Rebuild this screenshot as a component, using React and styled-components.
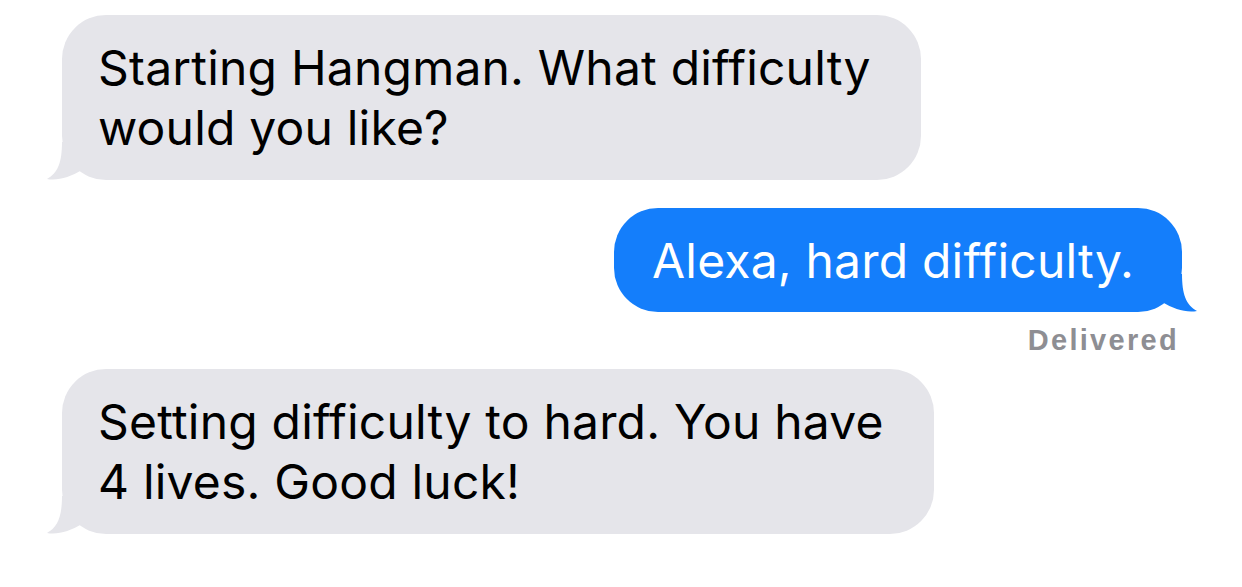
import React from 'react';
import styled, { createGlobalStyle } from 'styled-components';

const messages = [
  { id: 1, fromMe: false, lines: ['Starting Hangman. What difficulty', 'would you like?'] },
  { id: 2, fromMe: true, lines: ['Alexa, hard difficulty.'], status: 'Delivered' },
  { id: 3, fromMe: false, lines: ['Setting difficulty to hard. You have', '4 lives. Good luck!'] },
];

const bubbleColor = (fromMe) => (fromMe ? '#147efb' : '#e5e5ea');

// little curled tail at the bottom corner of a bubble
function Tail({ fromMe }) {
  return (
    <TailShape $fromMe={fromMe} viewBox="0 0 40 40">
      <path
        d="M16 2 C16 22 12 33 1 39 C12 41 24 37 36 30 L36 2 Z"
        fill={bubbleColor(fromMe)}
      />
    </TailShape>
  );
}

export default function App() {
  return (
    <>
      <GlobalStyle />
      <Thread>
        {messages.map((m) => (
          <Row key={m.id} $fromMe={m.fromMe}>
            <Bubble $fromMe={m.fromMe}>
              <Tail fromMe={m.fromMe} />
              {m.lines.map((line, i) => (
                <Line key={i}>{line}</Line>
              ))}
            </Bubble>
            {m.status && <Status>{m.status}</Status>}
          </Row>
        ))}
      </Thread>
    </>
  );
}

const GlobalStyle = createGlobalStyle`
  body {
    margin: 0;
    background: #ffffff;
    font-family: Inter, "Liberation Sans", Arial, sans-serif;
  }
`;

const Thread = styled.div`
  display: flex;
  flex-direction: column;
  gap: 28px;
  padding: 15px 60px 0 62px;
`;

const Row = styled.div`
  display: flex;
  flex-direction: column;
  align-items: ${({ $fromMe }) => ($fromMe ? 'flex-end' : 'flex-start')};
`;

const Bubble = styled.div`
  position: relative;
  width: fit-content;
  padding: ${({ $fromMe }) => ($fromMe ? '23px 48px 21px 38px' : '23px 50px 22px 36px')};
  border-radius: 44px;
  background: ${({ $fromMe }) => bubbleColor($fromMe)};
  color: ${({ $fromMe }) => ($fromMe ? '#ffffff' : '#000000')};
  font-size: 48px;
  line-height: 60px;
  letter-spacing: 0.2px;
`;

const TailShape = styled.svg`
  position: absolute;
  bottom: 0;
  ${({ $fromMe }) => ($fromMe ? 'right: -16px;' : 'left: -16px;')}
  width: 40px;
  height: 40px;
  transform: ${({ $fromMe }) => ($fromMe ? 'scaleX(-1)' : 'none')};
`;

const Line = styled.div`
  position: relative;
  white-space: nowrap;
`;

const Status = styled.div`
  margin-top: 11px;
  margin-bottom: -16px;
  margin-right: 3px;
  font-family: "Liberation Sans", Arial, sans-serif;
  font-weight: 700;
  font-size: 29px;
  line-height: 34px;
  letter-spacing: 2.3px;
  color: #8e8e93;
`;
